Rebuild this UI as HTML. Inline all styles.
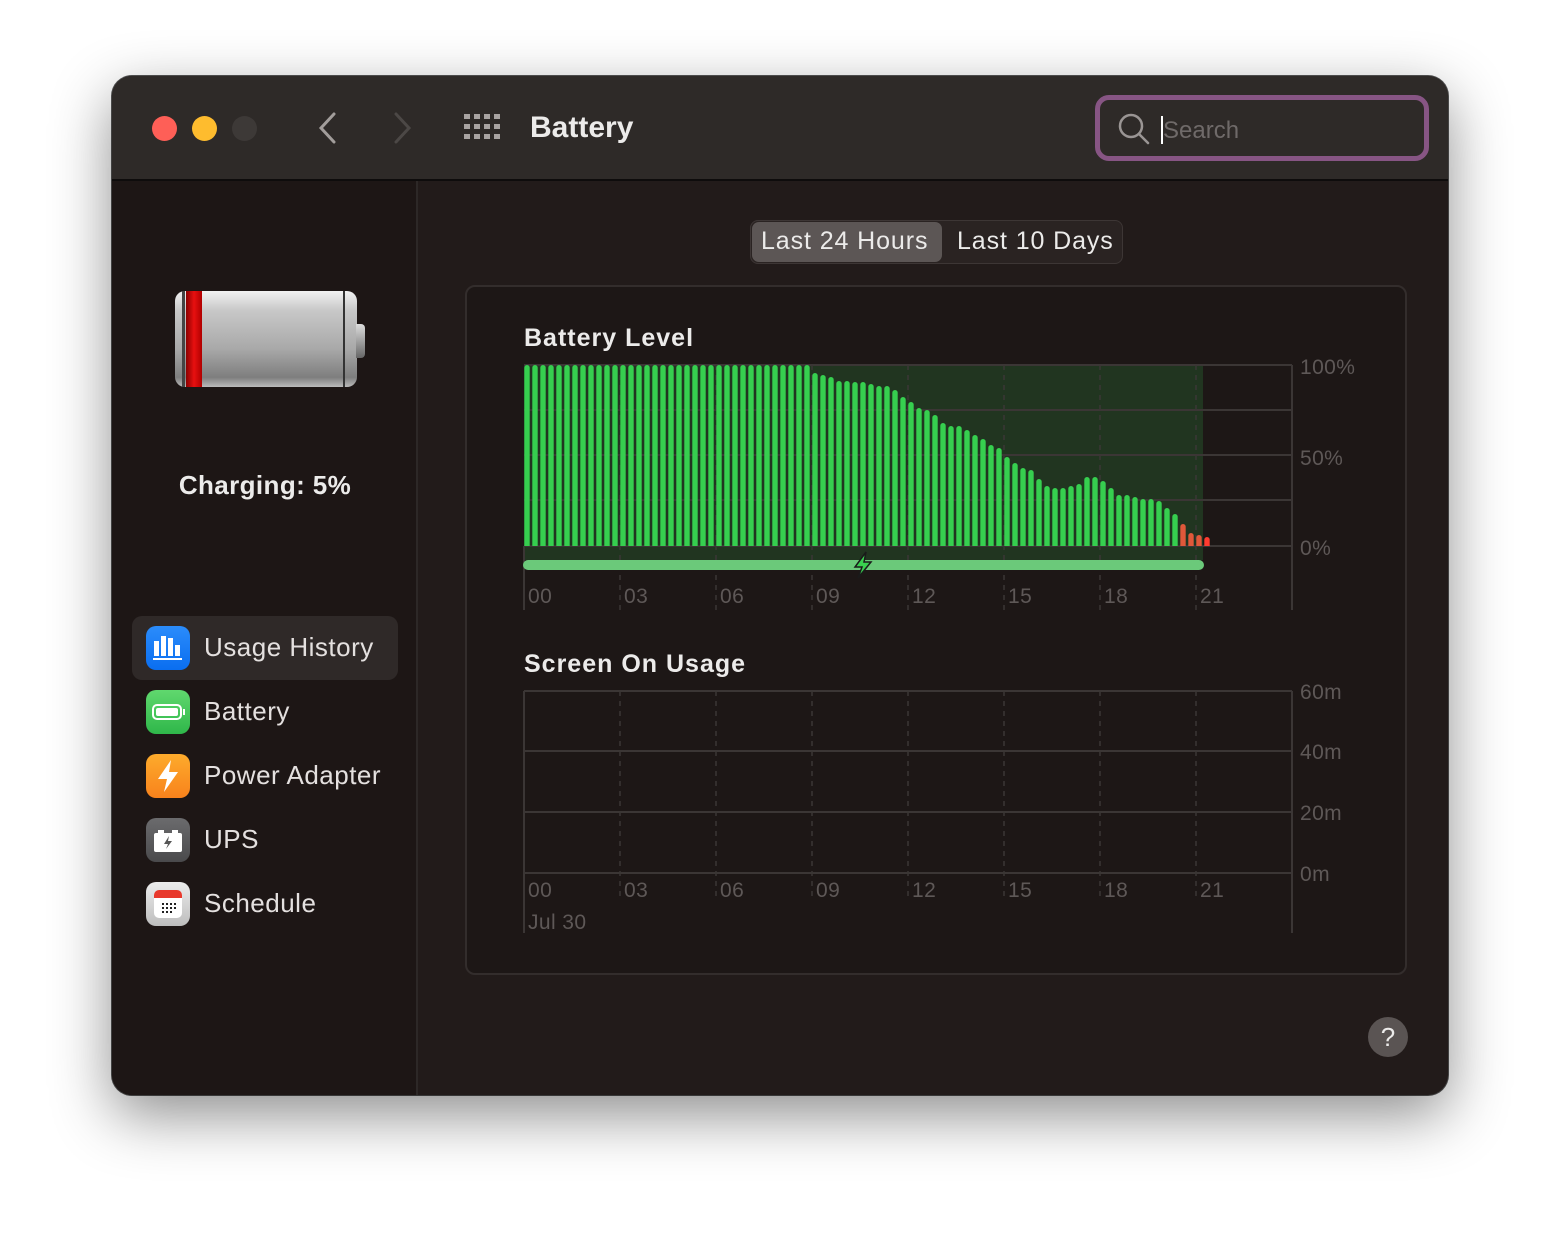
<!DOCTYPE html>
<html><head><meta charset="utf-8"><style>
*{margin:0;padding:0;box-sizing:border-box}
body{width:1560px;height:1244px;background:#fff;font-family:"Liberation Sans",sans-serif;position:relative;overflow:hidden}
.win{position:absolute;left:112px;top:76px;width:1336px;height:1019px;border-radius:20px;background:#221b1a;overflow:hidden;box-shadow:0 20px 60px rgba(0,0,0,.45),0 0 0 1px #555;}
.tb{position:absolute;left:0;top:0;width:1336px;height:105px;background:#2e2a28;border-bottom:2px solid #0e0c0c}
.dot{position:absolute;top:40px;width:25px;height:25px;border-radius:50%}
.side{position:absolute;left:0;top:105px;width:306px;height:914px;background:#1d1615;border-right:2px solid #2d2827}
.abs{position:absolute}
.item{position:absolute;left:20px;width:266px;height:64px;border-radius:10px;color:#e4e0df;font-size:26px;letter-spacing:0.5px}
.item .ic{position:absolute;left:14px;top:10px;width:44px;height:44px;border-radius:10px}
.item span{position:absolute;left:72px;top:16px}
.lbl{position:absolute;color:#5e5857;font-size:21px;letter-spacing:0.4px}
</style></head><body>
<div class="win">
 <div class="tb">
  <div class="dot" style="left:40px;background:#fe5f57"></div>
  <div class="dot" style="left:80px;background:#febc2e"></div>
  <div class="dot" style="left:120px;background:#3d3937"></div>
  <svg class="abs" style="left:200px;top:34px" width="30" height="36"><path d="M22 4 L9 18 L22 32" stroke="#a29d9b" stroke-width="3" fill="none" stroke-linecap="round"/></svg>
  <svg class="abs" style="left:276px;top:34px" width="30" height="36"><path d="M8 4 L21 18 L8 32" stroke="#4c4846" stroke-width="3" fill="none" stroke-linecap="round"/></svg>
  <svg class="abs" style="left:352px;top:38px" width="38" height="28" fill="#a9a4a2">
   <rect x="0" y="0" width="6" height="5"/><rect x="10" y="0" width="6" height="5"/><rect x="20" y="0" width="6" height="5"/><rect x="30" y="0" width="6" height="5"/>
   <rect x="0" y="10" width="6" height="5"/><rect x="10" y="10" width="6" height="5"/><rect x="20" y="10" width="6" height="5"/><rect x="30" y="10" width="6" height="5"/>
   <rect x="0" y="20" width="6" height="5"/><rect x="10" y="20" width="6" height="5"/><rect x="20" y="20" width="6" height="5"/><rect x="30" y="20" width="6" height="5"/></svg>
  <div class="abs" style="left:418px;top:35px;color:#ecebea;font-size:30px;font-weight:bold">Battery</div>
  <div class="abs" style="left:983px;top:19px;width:334px;height:66px;border:5px solid #875584;border-radius:14px;background:#2e2a28"></div>
  <svg class="abs" style="left:1005px;top:36px" width="34" height="34"><circle cx="14" cy="14" r="11" stroke="#9a9594" stroke-width="2.5" fill="none"/><path d="M22 22 L31 31" stroke="#9a9594" stroke-width="2.5" stroke-linecap="round"/></svg>
  <div class="abs" style="left:1049px;top:40px;width:2px;height:28px;background:#fff"></div>
  <div class="abs" style="left:1051px;top:41px;color:#6f6a69;font-size:24px">Search</div>
 </div>
 <div class="side">
  <div class="abs" style="left:63px;top:110px;width:182px;height:96px;border-radius:10px;background:linear-gradient(#f2f2f2,#c8c8c8 20%,#a9a9a9 60%,#7e7e7e 90%,#bbb)"></div>
  <div class="abs" style="left:74px;top:110px;width:16px;height:96px;background:linear-gradient(90deg,#8a0000,#e81010,#b00000)"></div>
  <div class="abs" style="left:70px;top:110px;width:3px;height:96px;background:#444"></div>
  <div class="abs" style="left:231px;top:110px;width:2px;height:96px;background:#333"></div>
  <div class="abs" style="left:244px;top:143px;width:9px;height:34px;border-radius:0 4px 4px 0;background:linear-gradient(#ddd,#666)"></div>
  <div class="abs" style="left:0;top:289px;width:306px;text-align:center;color:#ecebea;font-size:26px;font-weight:bold;letter-spacing:0.4px">Charging: 5%</div>
  <div class="item" style="top:435px;background:#2f2928"><div class="ic" style="background:linear-gradient(#2b8cfb,#0a6ef0)"><svg width="44" height="44"><g fill="#fff"><rect x="8" y="15" width="5" height="15"/><rect x="15" y="10" width="5" height="20"/><rect x="22" y="12" width="5" height="18"/><rect x="29" y="19" width="5" height="11"/><rect x="7" y="32" width="29" height="2"/></g></svg></div><span>Usage History</span></div>
  <div class="item" style="top:499px"><div class="ic" style="background:linear-gradient(#60d86e,#2fb74a)"><svg width="44" height="44"><rect x="7" y="15" width="28" height="14" rx="4" stroke="#fff" stroke-width="2" fill="none"/><rect x="10" y="18" width="22" height="8" rx="2" fill="#fff"/><rect x="37" y="19" width="2" height="6" fill="#fff"/></svg></div><span>Battery</span></div>
  <div class="item" style="top:563px"><div class="ic" style="background:linear-gradient(#fdab2c,#f8821c)"><svg width="44" height="44"><path d="M25 6 L12 25 L21 25 L18 38 L32 18 L23 18 Z" fill="#fff"/></svg></div><span>Power Adapter</span></div>
  <div class="item" style="top:627px"><div class="ic" style="background:linear-gradient(#6b6b6d,#4a4a4c)"><svg width="44" height="44"><rect x="8" y="15" width="28" height="19" rx="2" fill="#fff"/><rect x="12" y="12" width="6" height="4" fill="#fff"/><rect x="26" y="12" width="6" height="4" fill="#fff"/><path d="M23 18 L18 26 L22 26 L20 31 L26 23 L22 23 Z" fill="#555"/></svg></div><span>UPS</span></div>
  <div class="item" style="top:691px"><div class="ic" style="background:linear-gradient(#ececec,#bdbdbd)"><svg width="44" height="44"><rect x="8" y="8" width="28" height="28" rx="5" fill="#fff"/><path d="M8 13 a5 5 0 0 1 5 -5 h18 a5 5 0 0 1 5 5 v3 h-28z" fill="#e8392c"/><g fill="#222"><rect x="16" y="21" width="2" height="2"/><rect x="20" y="21" width="2" height="2"/><rect x="24" y="21" width="2" height="2"/><rect x="28" y="21" width="2" height="2"/><rect x="16" y="25" width="2" height="2"/><rect x="20" y="25" width="2" height="2"/><rect x="24" y="25" width="2" height="2"/><rect x="28" y="25" width="2" height="2"/><rect x="16" y="29" width="2" height="2"/><rect x="20" y="29" width="2" height="2"/><rect x="24" y="29" width="2" height="2"/></g></svg></div><span>Schedule</span></div>
 </div>
 <div class="abs" style="left:638px;top:144px;width:373px;height:44px;border:1px solid #3d3635;border-radius:8px;background:#2a2322"></div>
 <div class="abs" style="left:640px;top:146px;width:190px;height:40px;border-radius:7px;background:#5c5655"></div>
 <div class="abs" style="left:649px;top:151px;color:#ecebea;font-size:25px;letter-spacing:0.9px">Last 24 Hours</div>
 <div class="abs" style="left:845px;top:151px;color:#ecebea;font-size:25px;letter-spacing:0.9px">Last 10 Days</div>
 <div class="abs" style="left:353px;top:209px;width:942px;height:690px;border:2px solid #332d2c;border-radius:10px;background:#1d1716"></div>
 <div class="abs" style="left:412px;top:248px;color:#ecebea;font-size:25px;font-weight:bold;letter-spacing:1px">Battery Level</div>
 <div class="abs" style="left:412px;top:574px;color:#ecebea;font-size:25px;font-weight:bold;letter-spacing:1px">Screen On Usage</div>
 <svg class="abs" style="left:0;top:0" width="1336" height="1019">
  <g transform="translate(-112,-76)">
   <rect x="524" y="365" width="679" height="195" fill="#213520"/>
   <g stroke="#3b3635" stroke-width="2">
    <line x1="524" y1="365" x2="1292" y2="365"/><line x1="524" y1="410" x2="1292" y2="410"/><line x1="524" y1="455" x2="1292" y2="455"/><line x1="524" y1="500" x2="1292" y2="500"/><line x1="524" y1="546" x2="1292" y2="546"/>
    <line x1="1292" y1="365" x2="1292" y2="610"/><line x1="524" y1="546" x2="524" y2="610"/>
    <line x1="524" y1="691" x2="1292" y2="691"/><line x1="524" y1="751" x2="1292" y2="751"/><line x1="524" y1="812" x2="1292" y2="812"/><line x1="524" y1="873" x2="1292" y2="873"/>
    <line x1="1292" y1="691" x2="1292" y2="933"/><line x1="524" y1="691" x2="524" y2="933"/>
   </g>
   <g stroke="#3b3635" stroke-width="1.5" stroke-dasharray="5,5" id="vd"></g>
   <g id="bars"></g>
   <rect x="523" y="560" width="681" height="10" rx="5" fill="#6bc97a"/>
   <path d="M866 552 L855 567 L862 567 L858 578 L871 562 L864 562 Z" fill="#39d04f" stroke="#1a1a1a" stroke-width="1.5"/>
  </g>
 </svg>
 <div id="labels"></div>
 <div class="abs" style="left:1256px;top:941px;width:40px;height:40px;border-radius:50%;background:#5a5453;color:#ecebea;font-size:26px;text-align:center;line-height:40px">?</div>
</div>
<script>
var tops=[];for(var i=0;i<36;i++)tops.push(365);
tops=tops.concat([373,375,377,381,381,382,382,384,386,386,390,397,402,408,410,415,423,426,426,430,435,439,445,448,457,463,468,470,479,486,488,488,486,484,477,477,481,488,495,495,497,499,499,501,508,514,524,533,535,537]);
var s='';for(var i=0;i<tops.length;i++){var c=i>=85?'#ff3b30':(i>=82?'#e0583a':'#36cf4f');var x=524+8*i+0.3;
s+='<path d="M'+x+' 546 V'+(tops[i]+2.7)+' a2.7 2.7 0 0 1 5.4 0 V546 Z" fill="'+c+'"/>';}
document.getElementById('bars').innerHTML=s;
var v='';for(var k=1;k<8;k++){var x=524+96*k;v+='<line x1="'+x+'" y1="365" x2="'+x+'" y2="610"/><line x1="'+x+'" y1="691" x2="'+x+'" y2="900"/>';}
document.getElementById('vd').innerHTML=v;
var L='',hh=['00','03','06','09','12','15','18','21'];
for(var k=0;k<8;k++){L+='<div class="lbl" style="left:'+(416+96*k)+'px;top:509px">'+hh[k]+'</div><div class="lbl" style="left:'+(416+96*k)+'px;top:803px">'+hh[k]+'</div>';}
L+='<div class="lbl" style="left:416px;top:835px">Jul 30</div>';
var R=[['100%',280],['50%',371],['0%',461],['60m',605],['40m',665],['20m',726],['0m',787]];
R.forEach(function(r){L+='<div class="lbl" style="left:1188px;top:'+r[1]+'px">'+r[0]+'</div>';});
document.getElementById('labels').innerHTML=L;
</script>
</body></html>
